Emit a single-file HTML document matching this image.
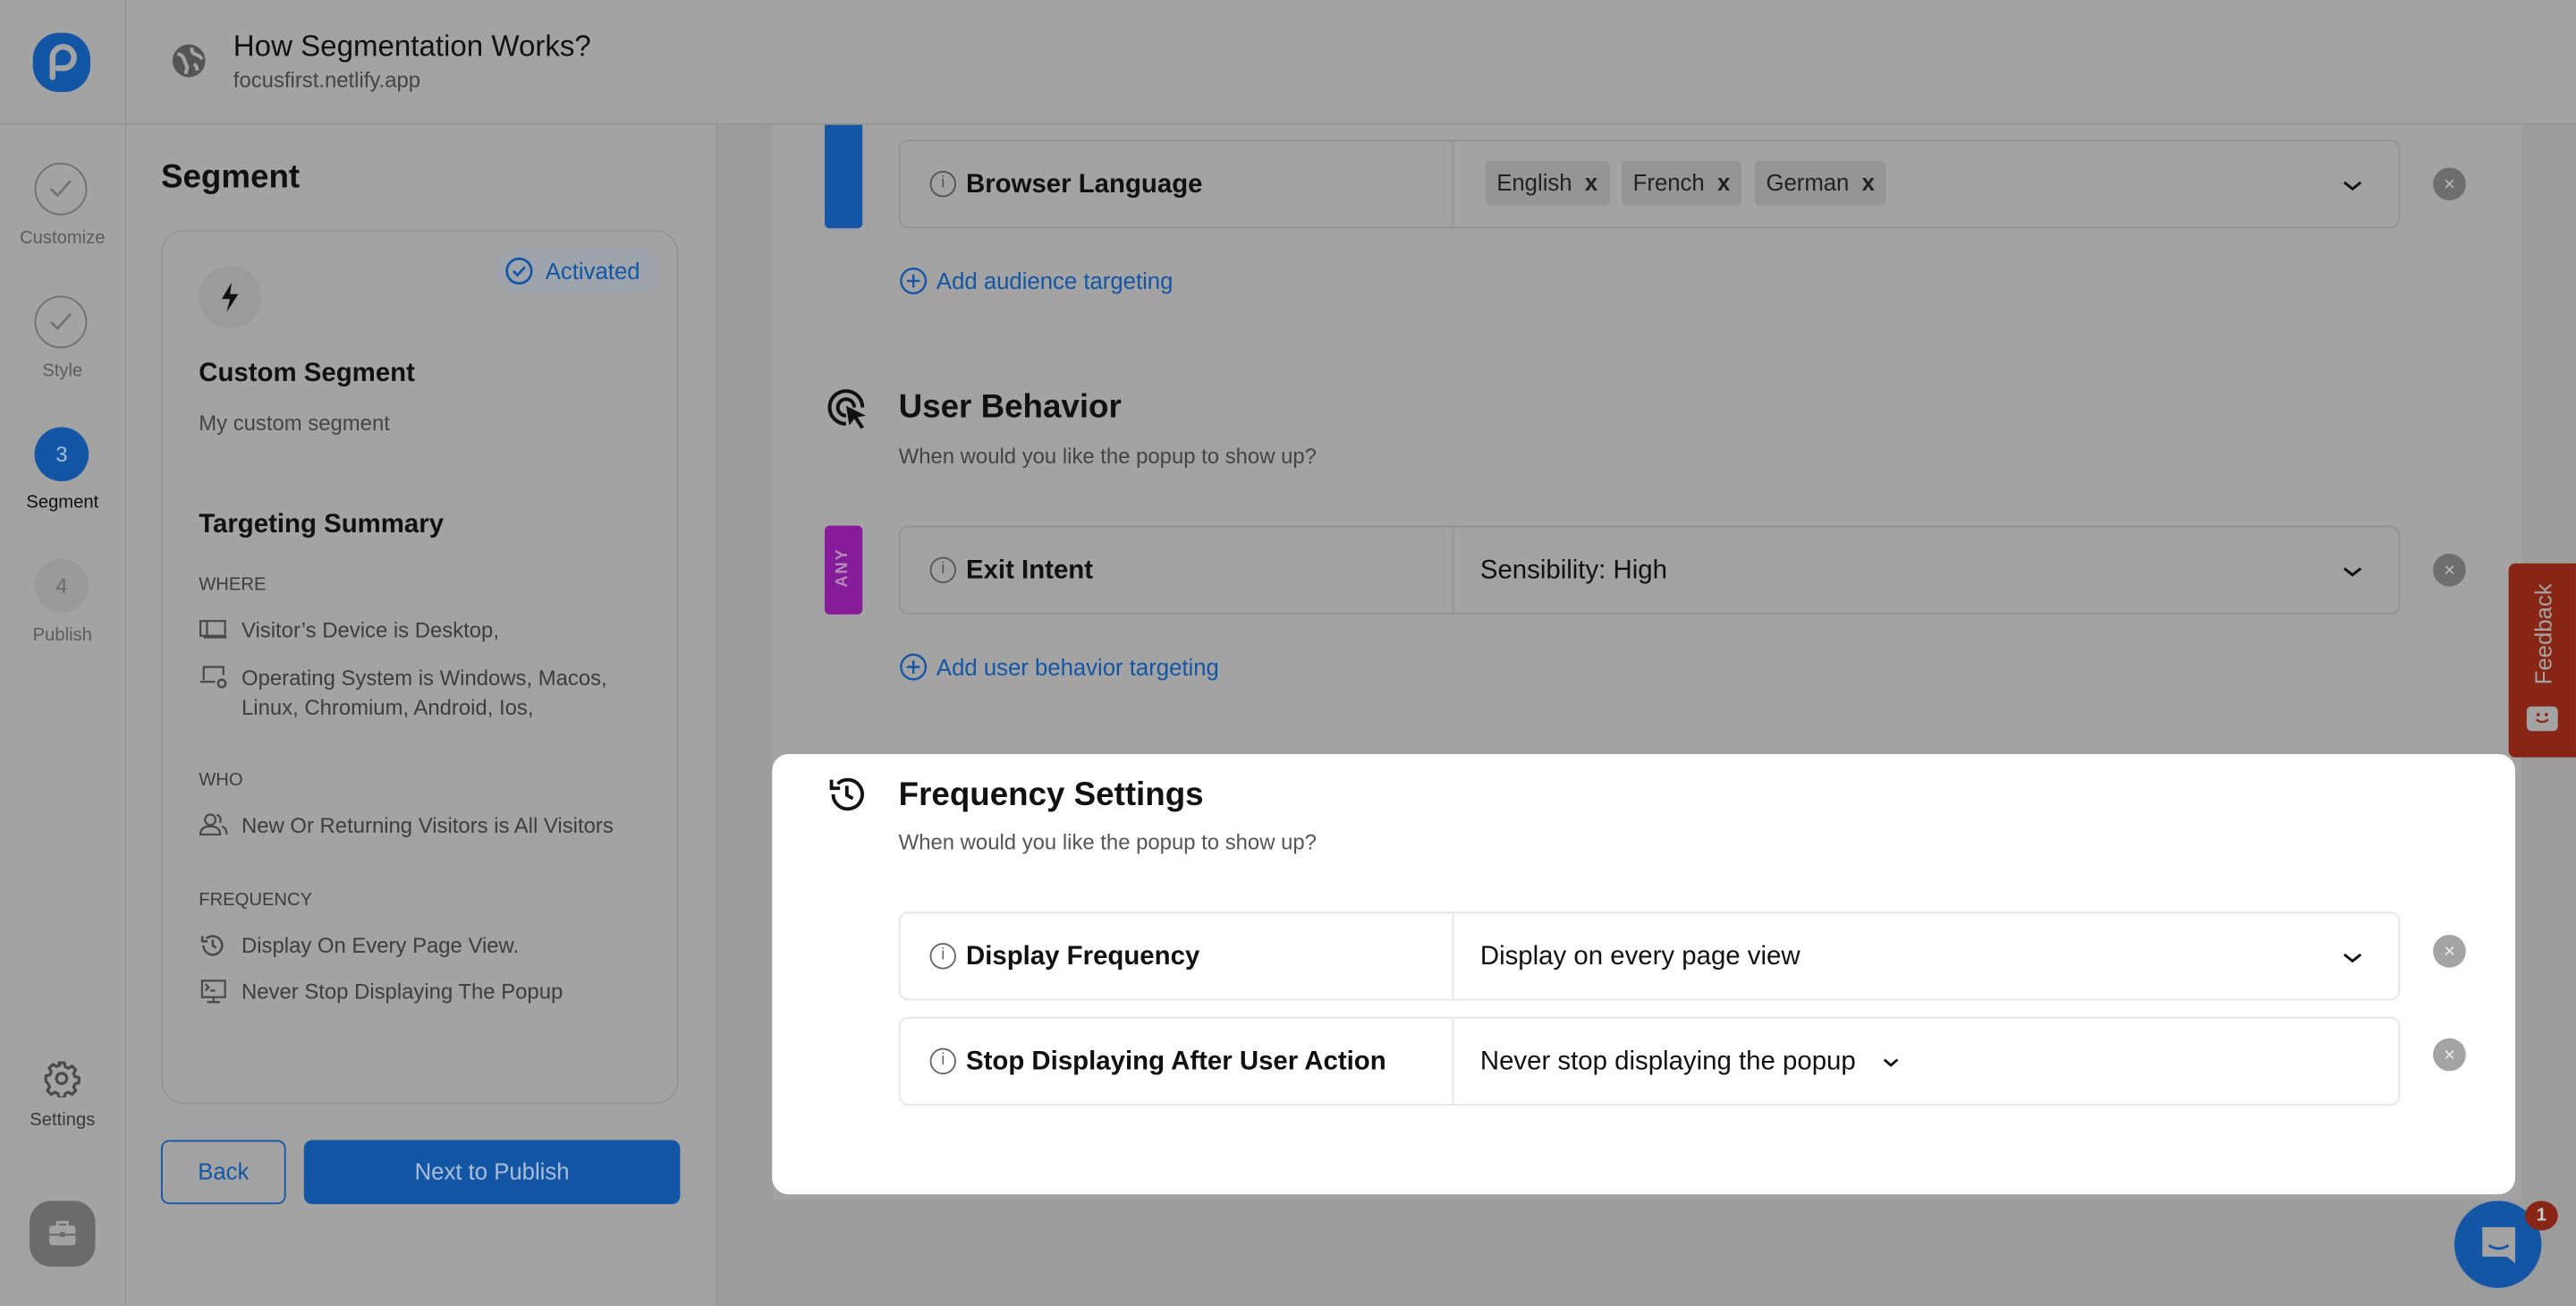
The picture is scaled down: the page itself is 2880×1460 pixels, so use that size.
<!DOCTYPE html>
<html><head><meta charset="utf-8">
<style>
html,body{margin:0;padding:0;width:2880px;height:1460px;overflow:hidden;background:#9c9c9c;}
#s{position:absolute;left:0;top:0;width:1568px;height:795px;transform:scale(1.8367,1.8365);transform-origin:0 0;font-family:"Liberation Sans",sans-serif;color:#111;}
.a{position:absolute;}
.t{position:absolute;white-space:nowrap;}
.row{position:absolute;left:547px;width:912px;height:52px;border:1px solid #939393;border-radius:6px;}
.row .div{position:absolute;left:336px;top:0;bottom:0;border-left:1px solid #939393;}
.wrow{border-color:#e6e6e6;}
.wrow .div{border-color:#e6e6e6;}
.lbl{position:absolute;left:40px;top:18px;font-size:16px;font-weight:bold;}
.ic{position:absolute;left:18px;top:18px;width:14px;height:14px;border:1.3px solid #555;border-radius:50%;font-size:10px;line-height:14px;text-align:center;color:#555;}
.val{position:absolute;left:353px;top:18px;font-size:16px;}
.chev{position:absolute;}
.cx{position:absolute;width:20px;height:20px;border-radius:50%;background:#6e6e6e;color:#bbb;font-size:12px;line-height:20px;text-align:center;}
.tag{position:absolute;top:12px;height:27px;background:#959595;border-radius:3px;font-size:14px;line-height:27px;padding:0 7px;color:#222;}
.step{position:absolute;left:21px;width:30px;height:30px;border:1.5px solid #707070;border-radius:50%;}
.sl{position:absolute;width:76px;left:0;text-align:center;font-size:11px;color:#5c5c5c;}
.sum{position:absolute;left:147px;font-size:13px;color:#3d3d3d;}
.head{position:absolute;left:121px;font-size:11px;color:#3d3d3d;}
</style></head><body>
<div id="s">
<div class="a" style="left:0;top:0;width:1568px;height:75px;background:#a3a3a3;border-bottom:1px solid #959595;"></div>
<div class="a" style="left:76px;top:0;width:1px;height:795px;background:#959595;"></div>
<div class="a" style="left:0;top:76px;width:76px;height:719px;background:#a3a3a3;"></div>
<div class="a" style="left:20px;top:20px;width:35px;height:36px;background:#1456a6;border-radius:45%;"></div>
<svg class="a" style="left:20px;top:20px" width="35" height="36" viewBox="0 0 35 36"><path d="M12 27 V15 a6.5 6.5 0 1 1 6 6.5 H15" fill="none" stroke="#a3a3a3" stroke-width="3.5" stroke-linecap="round"/></svg>
<svg class="a" style="left:103px;top:25px" width="24" height="24" viewBox="0 0 24 24"><circle cx="12" cy="12" r="10" fill="#555"/><path d="M5 8 q3 0 4 3 t2 5 l-1 4 M14 4 q-1 3 2 4 t4 3 M15 14 q2 1 2 4" stroke="#a3a3a3" stroke-width="2.2" fill="none"/></svg>
<div class="t" style="left:142px;top:18px;font-size:18px;color:#111;">How Segmentation Works?</div>
<div class="t" style="left:142px;top:41px;font-size:13px;color:#444;">focusfirst.netlify.app</div>

<div class="step" style="top:99px"></div><svg class="a" style="left:29px;top:108px" width="16" height="14"><path d="M2 7 l4 4 l8 -9" stroke="#707070" stroke-width="1.4" fill="none"/></svg>
<div class="sl" style="top:139px">Customize</div>
<div class="step" style="top:180px"></div><svg class="a" style="left:29px;top:189px" width="16" height="14"><path d="M2 7 l4 4 l8 -9" stroke="#707070" stroke-width="1.4" fill="none"/></svg>
<div class="sl" style="top:220px">Style</div>
<div class="a" style="left:21px;top:260px;width:33px;height:33px;border-radius:50%;background:#1456a6;color:#a9bed8;font-size:13px;text-align:center;line-height:33px;">3</div>
<div class="sl" style="top:300px;color:#111;">Segment</div>
<div class="a" style="left:21px;top:340px;width:33px;height:33px;border-radius:50%;background:#9a9a9a;color:#6a6a6a;font-size:13px;text-align:center;line-height:33px;">4</div>
<div class="sl" style="top:381px">Publish</div>
<svg class="a" style="left:26px;top:645px" width="23" height="23" viewBox="0 0 24 24"><circle cx="12" cy="12" r="3.3" fill="none" stroke="#4a4a4a" stroke-width="1.8"/><path d="M10.3 2h3.4l.6 2.6 2 .9 2.3-1.4 2.4 2.4-1.4 2.3.9 2 2.5.6v3.4l-2.5.6-.9 2 1.4 2.3-2.4 2.4-2.3-1.4-2 .9-.6 2.6h-3.4l-.6-2.6-2-.9-2.3 1.4-2.4-2.4 1.4-2.3-.9-2L2 13.7v-3.4l2.6-.6.9-2-1.4-2.3 2.4-2.4 2.3 1.4 2-.9z" fill="none" stroke="#4a4a4a" stroke-width="1.8" stroke-linejoin="round"/></svg>
<div class="sl" style="top:676px;color:#3a3a3a">Settings</div>
<div class="a" style="left:18px;top:731px;width:40px;height:40px;border-radius:13px;background:#6b6b6b;"></div>
<svg class="a" style="left:29px;top:742px" width="18" height="17" viewBox="0 0 18 17"><rect x="1" y="4" width="16" height="12" rx="2" fill="#a3a3a3"/><path d="M6 4 V2 h6 v2" stroke="#a3a3a3" stroke-width="1.6" fill="none"/><rect x="1" y="9" width="16" height="1.2" fill="#6b6b6b"/><rect x="7.5" y="8" width="3" height="3" fill="#6b6b6b"/></svg>

<div class="a" style="left:77px;top:76px;width:359px;height:719px;background:#a3a3a3;border-right:1px solid #959595;"></div>
<div class="t" style="left:98px;top:97px;font-size:20px;font-weight:bold;">Segment</div>
<div class="a" style="left:98px;top:140px;width:313px;height:530px;border:1px solid #959595;border-radius:14px;"></div>
<div class="a" style="left:302px;top:151px;width:100px;height:28px;border-radius:14px;background:#9da4ac;"></div>
<svg class="a" style="left:307px;top:156px" width="18" height="18"><circle cx="9" cy="9" r="7.5" fill="none" stroke="#1456a6" stroke-width="1.5"/><path d="M5.5 9 l2.5 2.5 l4.5 -5" stroke="#1456a6" stroke-width="1.5" fill="none"/></svg>
<div class="t" style="left:332px;top:157px;font-size:14px;color:#1456a6;">Activated</div>
<div class="a" style="left:121px;top:162px;width:38px;height:38px;border-radius:50%;background:#9b9b9b;"></div>
<svg class="a" style="left:134px;top:172px" width="12" height="18" viewBox="0 0 12 18"><path d="M7 0 L1 10 H6 L4 18 L11 7 H6 Z" fill="#111"/></svg>
<div class="t" style="left:121px;top:219px;font-size:16px;font-weight:bold;">Custom Segment</div>
<div class="t" style="left:121px;top:250px;font-size:13px;color:#454545;">My custom segment</div>
<div class="t" style="left:121px;top:311px;font-size:16px;font-weight:bold;">Targeting Summary</div>
<div class="head" style="top:350px">WHERE</div>
<svg class="a" style="left:121px;top:376px" width="18" height="14"><rect x="1" y="2" width="4" height="9" fill="none" stroke="#4a4a4a" stroke-width="1.2"/><path d="M5 2 H16 V11 H5 M3 12 H17" stroke="#4a4a4a" stroke-width="1.2" fill="none"/></svg>
<div class="sum" style="top:376px">Visitor’s Device is Desktop,</div>
<svg class="a" style="left:121px;top:404px" width="18" height="16"><path d="M3 10 V2 H15 V7 M1 11 H10" stroke="#4a4a4a" stroke-width="1.2" fill="none"/><circle cx="14" cy="12" r="2.3" fill="none" stroke="#4a4a4a" stroke-width="1.3"/></svg>
<div class="sum" style="top:404px;line-height:18px;">Operating System is Windows, Macos,<br>Linux, Chromium, Android, Ios,</div>
<div class="head" style="top:469px">WHO</div>
<svg class="a" style="left:121px;top:494px" width="18" height="16"><circle cx="7" cy="5" r="3.2" fill="none" stroke="#4a4a4a" stroke-width="1.2"/><path d="M1 14 q0-5 6-5 q6 0 6 5 Z M11 2 q3 1 2 5 M14 9 q3 1 3 5" stroke="#4a4a4a" stroke-width="1.2" fill="none"/></svg>
<div class="sum" style="top:495px">New Or Returning Visitors is All Visitors</div>
<div class="head" style="top:542px">FREQUENCY</div>
<svg class="a" style="left:121px;top:567px" width="17" height="17" viewBox="0 0 24 24"><path d="M4 12 a8 8 0 1 0 2.5-5.8 M3 4 v4.5 h4.5 M12 7 v5 l3 2" stroke="#4a4a4a" stroke-width="2" fill="none"/></svg>
<div class="sum" style="top:568px">Display On Every Page View.</div>
<svg class="a" style="left:121px;top:595px" width="18" height="17"><path d="M2 2 H16 V12 H2 Z M9 12 V15 M5 15 H13 M4 4 l2 2 l-2 2 M7 8 H10" stroke="#4a4a4a" stroke-width="1.2" fill="none"/></svg>
<div class="sum" style="top:596px">Never Stop Displaying The Popup</div>
<div class="a" style="left:98px;top:694px;width:74px;height:37px;border:1.3px solid #1456a6;border-radius:5px;color:#1456a6;font-size:14px;line-height:37px;text-align:center;">Back</div>
<div class="a" style="left:185px;top:694px;width:229px;height:39px;background:#1456a6;border-radius:5px;color:#a9bed8;font-size:14px;line-height:39px;text-align:center;">Next to Publish</div>

<div class="a" style="left:470px;top:76px;width:1065px;height:655px;background:#a3a3a3;"></div>
<div class="a" style="left:502px;top:76px;width:23px;height:63px;background:#1456a6;border-radius:0 0 3px 3px;"></div>
<div class="row" style="top:85px"><div class="div"></div><div class="ic">i</div><div class="lbl">Browser Language</div>
<div class="tag" style="left:356px">English &nbsp;<b>x</b></div><div class="tag" style="left:439px">French &nbsp;<b>x</b></div><div class="tag" style="left:520px">German &nbsp;<b>x</b></div>
<svg class="chev" style="left:878px;top:22px" width="12" height="10"><path d="M1 3 l5 4 l5 -4" stroke="#111" stroke-width="1.6" fill="none"/></svg></div>
<div class="cx" style="left:1481px;top:102px">×</div>
<svg class="a" style="left:547px;top:162px" width="18" height="18"><circle cx="9" cy="9" r="7.5" fill="none" stroke="#1456a6" stroke-width="1.3"/><path d="M9 5 V13 M5 9 H13" stroke="#1456a6" stroke-width="1.3"/></svg>
<div class="t" style="left:570px;top:163px;font-size:14px;color:#1456a6;">Add audience targeting</div>

<svg class="a" style="left:503px;top:236px" width="26" height="27" viewBox="0 0 26 27"><path d="M12 22 a10 10 0 1 1 10-10 M12 17 a5 5 0 1 1 5-5" stroke="#111" stroke-width="2.2" fill="none"/><path d="M12 11 L24 17 L19 18 L23 24 L21 25 L17 19 L14 23 Z" fill="#111"/></svg>
<div class="t" style="left:547px;top:237px;font-size:20px;font-weight:bold;">User Behavior</div>
<div class="t" style="left:547px;top:270px;font-size:13px;color:#444;">When would you like the popup to show up?</div>

<div class="a" style="left:502px;top:320px;width:23px;height:54px;background:#861c9a;border-radius:3px;"></div>
<div class="t" style="left:497px;top:340px;width:32px;text-align:center;transform:rotate(-90deg);font-size:10px;color:#b18ab8;letter-spacing:1px;font-weight:bold;">ANY</div>
<div class="row" style="top:320px"><div class="div"></div><div class="ic">i</div><div class="lbl">Exit Intent</div><div class="val">Sensibility: High</div>
<svg class="chev" style="left:878px;top:22px" width="12" height="10"><path d="M1 3 l5 4 l5 -4" stroke="#111" stroke-width="1.6" fill="none"/></svg></div>
<div class="cx" style="left:1481px;top:337px">×</div>
<svg class="a" style="left:547px;top:397px" width="18" height="18"><circle cx="9" cy="9" r="7.5" fill="none" stroke="#1456a6" stroke-width="1.3"/><path d="M9 5 V13 M5 9 H13" stroke="#1456a6" stroke-width="1.3"/></svg>
<div class="t" style="left:570px;top:398px;font-size:14px;color:#1456a6;">Add user behavior targeting</div>

<div class="a" style="left:470px;top:459px;width:1061px;height:268px;background:#fff;border-radius:10px;"></div>
<svg class="a" style="left:503px;top:471px" width="25" height="25" viewBox="0 0 24 24"><path d="M4 12 a8.5 8.5 0 1 0 2.6-6.1 M3 3.5 v5 h5 M12 7 v5.5 l3.5 2" stroke="#111" stroke-width="2" fill="none"/></svg>
<div class="t" style="left:547px;top:473px;font-size:20px;font-weight:bold;">Frequency Settings</div>
<div class="t" style="left:547px;top:505px;font-size:13px;color:#555;">When would you like the popup to show up?</div>
<div class="row wrow" style="top:555px"><div class="div"></div><div class="ic" style="border-color:#666;color:#666">i</div><div class="lbl">Display Frequency</div><div class="val">Display on every page view</div>
<svg class="chev" style="left:878px;top:22px" width="12" height="10"><path d="M1 3 l5 4 l5 -4" stroke="#111" stroke-width="1.6" fill="none"/></svg></div>
<div class="cx" style="left:1481px;top:569px;background:#a4a4a4;color:#eee">×</div>
<div class="row wrow" style="top:619px"><div class="div"></div><div class="ic" style="border-color:#666;color:#666">i</div><div class="lbl">Stop Displaying After User Action</div><div class="val">Never stop displaying the popup</div>
<svg class="chev" style="left:597px;top:22px" width="12" height="10"><path d="M2 3 l4 3.5 l4 -3.5" stroke="#111" stroke-width="1.5" fill="none"/></svg></div>
<div class="cx" style="left:1481px;top:632px;background:#a4a4a4;color:#eee">×</div>

<div class="a" style="left:1527px;top:343px;width:41px;height:118px;background:#882514;border-radius:4px 0 0 4px;"></div>
<div class="t" style="left:1508px;top:378px;width:80px;text-align:center;transform:rotate(-90deg);font-size:14px;color:#a3a3a3;">Feedback</div>
<div class="a" style="left:1538px;top:430px;width:19px;height:15px;background:#a3a3a3;border-radius:3px;"></div>
<svg class="a" style="left:1538px;top:430px" width="19" height="15"><circle cx="7" cy="5" r="1" fill="#882514"/><circle cx="12" cy="5" r="1" fill="#882514"/><path d="M6 8 q3.5 3 7 0" stroke="#882514" stroke-width="1.2" fill="none"/></svg>

<div class="a" style="left:1494px;top:731px;width:53px;height:53px;border-radius:50%;background:#1456a6;"></div>
<svg class="a" style="left:1508px;top:745px" width="26" height="26" viewBox="0 0 26 26"><path d="M3 2 H23 V24 L18 20 H3 Z" fill="#a3a3a3"/><path d="M7 13 q6 4 12 0" stroke="#1456a6" stroke-width="1.6" fill="none"/></svg>
<div class="a" style="left:1537px;top:731px;width:20px;height:18px;border-radius:50%;background:#882514;color:#ccc;font-size:11px;font-weight:bold;text-align:center;line-height:18px;">1</div>
</div>
</body></html>
